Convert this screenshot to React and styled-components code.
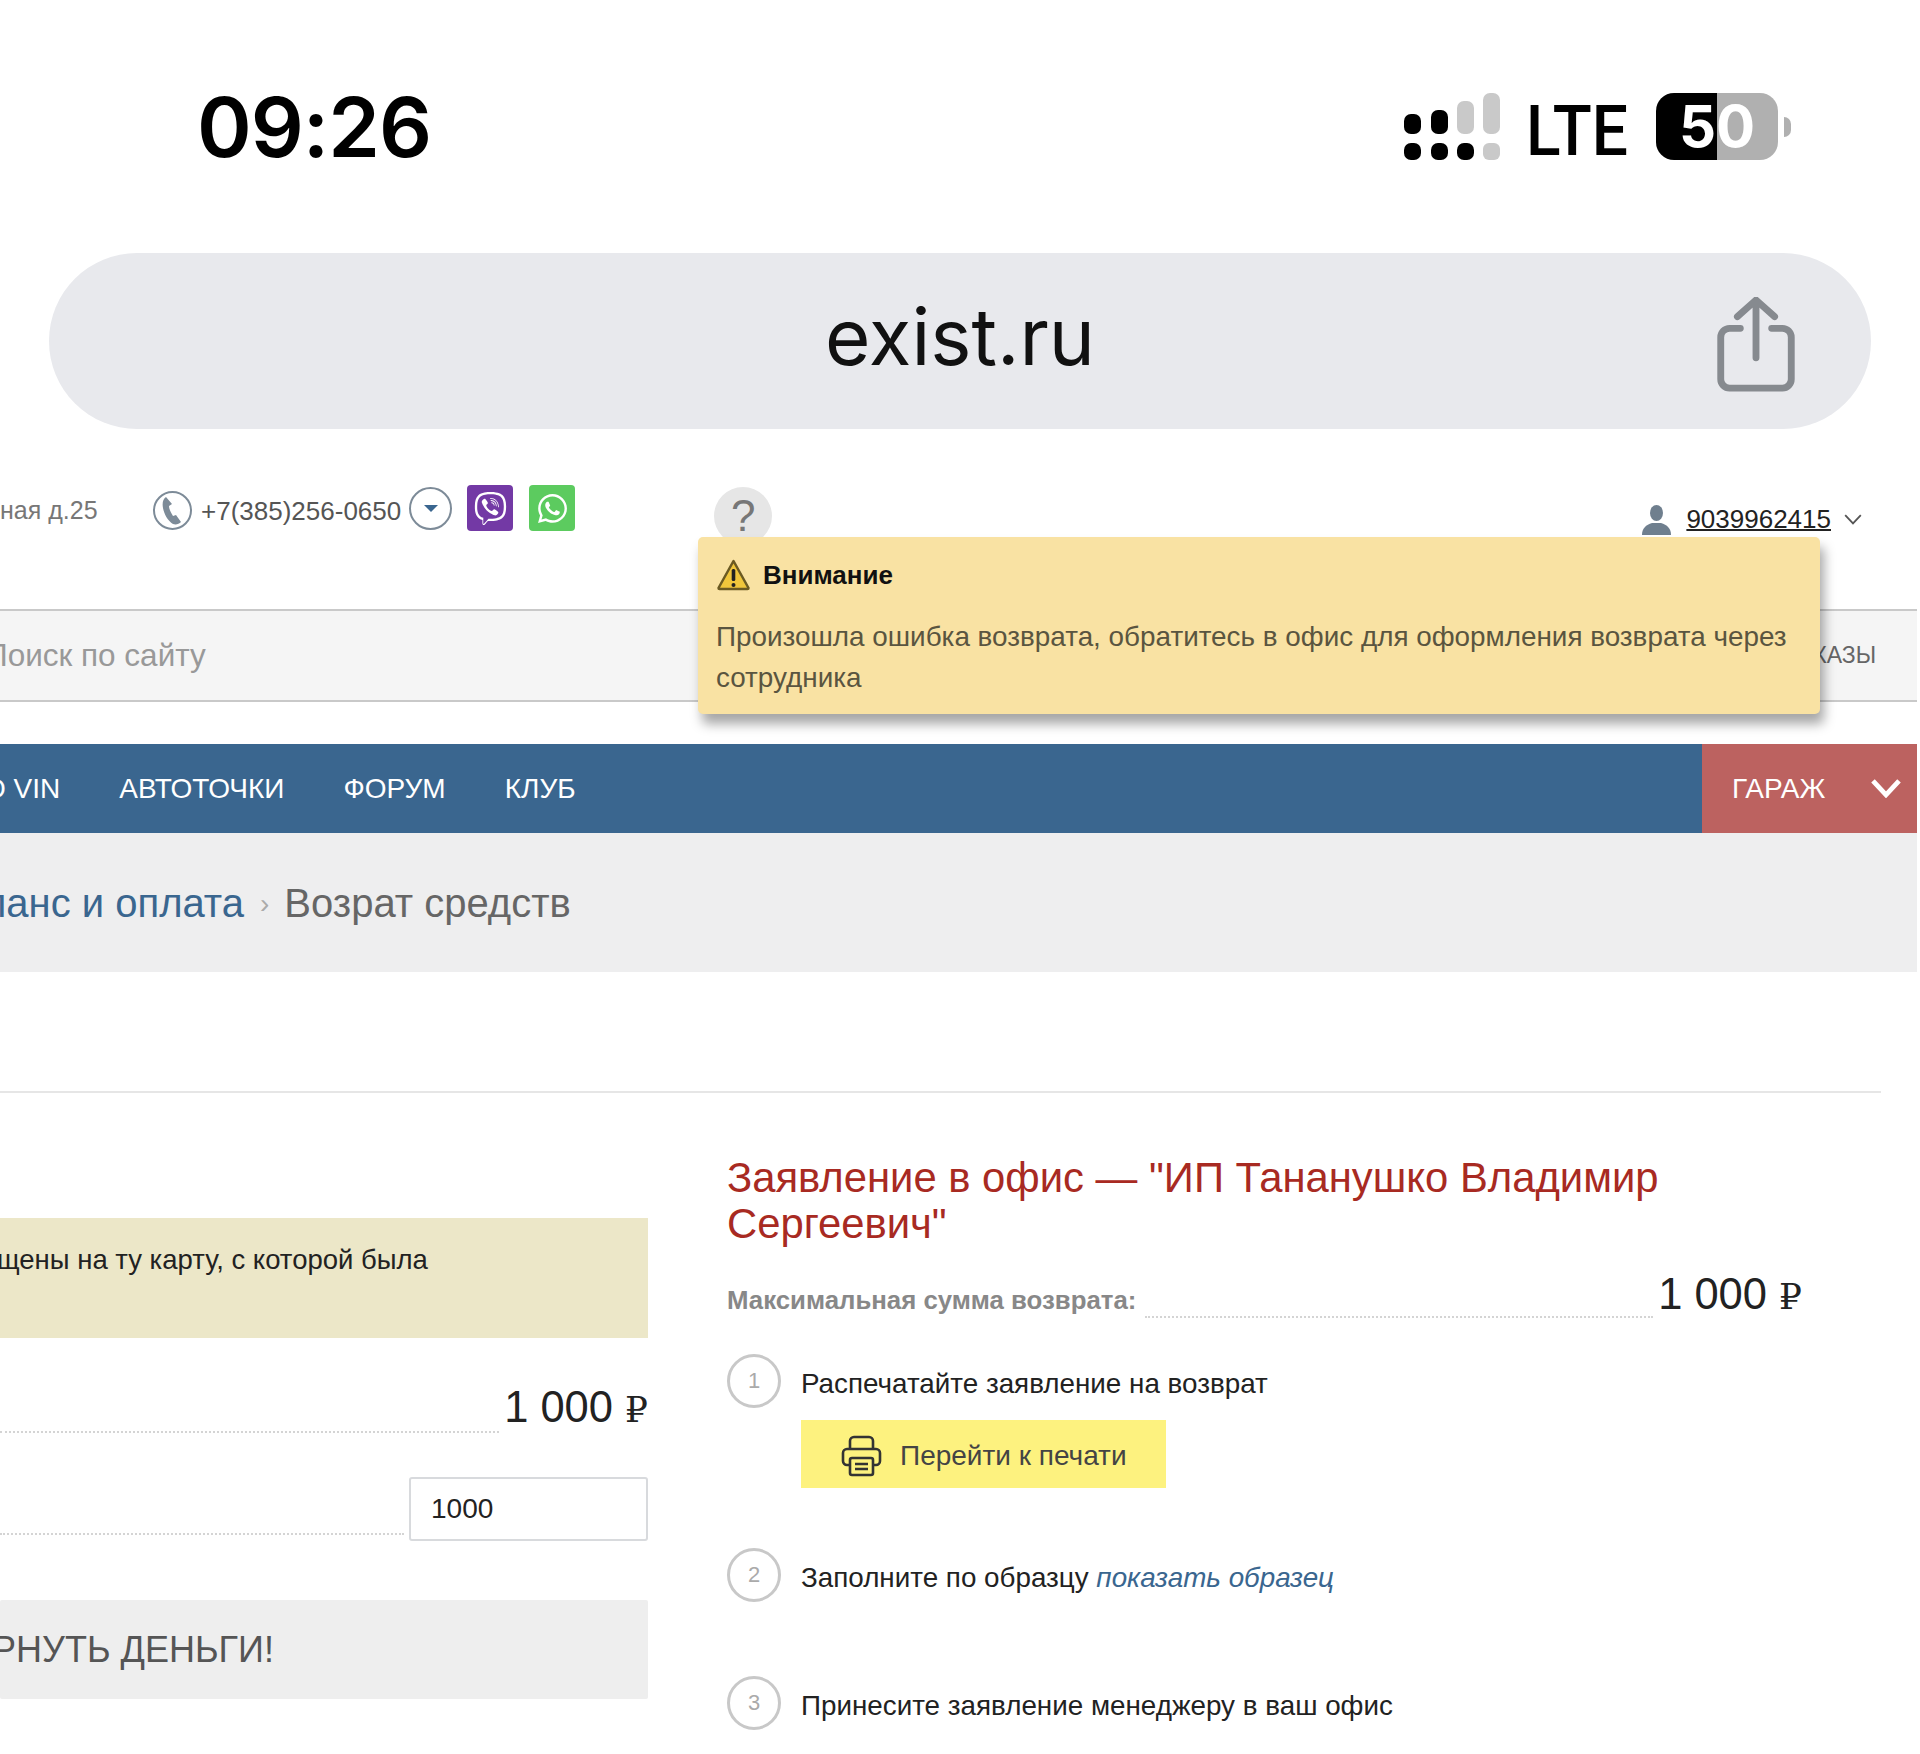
import styled, { createGlobalStyle } from "styled-components";
import { FaViber, FaWhatsapp } from "react-icons/fa";

const GlobalStyle = createGlobalStyle`
  * { box-sizing: border-box; }
  html, body { margin: 0; padding: 0; background: #fff; }
  body { font-family: "Liberation Sans", Arial, sans-serif; color: #222; }
`;

const Page = styled.div`
  position: relative;
  width: 1920px;
  height: 1754px;
  overflow: hidden;
  background: #fff;
`;

/* phone chrome */
const StatusBar = styled.div`
  display: flex;
  align-items: center;
  justify-content: space-between;
  height: 253px;
  padding: 0 129px 0 197px;
`;

const Clock = styled.div`
  font-family: Inter, sans-serif;
  font-size: 83px;
  font-weight: 600;
  letter-spacing: -1px;
  line-height: 1;
  color: #000;
  margin-top: 2px;
`;

const StatusIcons = styled.div`
  display: flex;
  align-items: center;
`;

const Lte = styled.div`
  width: 98px;
  margin: 8px 32px 0 26px;
  font-family: Roboto, sans-serif;
  font-size: 70px;
  font-weight: 500;
  line-height: 1;
  color: #000;
  transform: scaleX(0.915);
  transform-origin: left center;
`;

const Battery = styled.div`
  width: 122px;
  height: 67px;
  border-radius: 18px;
  background: linear-gradient(90deg, #000 0 50%, #b0b0b0 50% 100%);
  color: #fff;
  font-family: Inter, sans-serif;
  font-size: 58px;
  font-weight: 700;
  line-height: 67px;
  text-align: center;
`;

const BatteryNub = styled.div`
  width: 7px;
  height: 20px;
  margin-left: 6px;
  border-radius: 0 10px 10px 0;
  background: #b0b0b0;
`;

const UrlPill = styled.div`
  display: flex;
  align-items: center;
  justify-content: center;
  position: relative;
  height: 176px;
  margin: 0 49px;
  padding-bottom: 10px;
  border-radius: 88px;
  background: #e8e9ed;
  font-family: Inter, sans-serif;
  font-size: 78px;
  color: #111;
`;

const ShareButton = styled.svg`
  position: absolute;
  right: 75px;
  top: 44px;
`;

/* site header */
const TopRow = styled.div`
  display: flex;
  align-items: flex-start;
  height: 180px;
  padding: 56px 58px 0 0;
  font-size: 26px;
  color: #555;
`;

const Address = styled.div`
  width: 153px;
  margin-top: 11px;
  font-size: 25px;
  color: #777;
`;

const PhoneText = styled.div`
  margin: 11px 8px 0 9px;
  color: #555;
`;

const RoundIcon = styled.div`
  display: flex;
  align-items: center;
  justify-content: center;
  width: ${(p) => p.$size}px;
  height: ${(p) => p.$size}px;
  margin-top: ${(p) => p.$top}px;
  border: 2px solid #7d8b98;
  border-radius: 50%;
  background: #fff;
`;

const DropArrow = styled.span`
  width: 0;
  height: 0;
  border-left: 7px solid transparent;
  border-right: 7px solid transparent;
  border-top: 7px solid #3a668f;
`;

const Messenger = styled.div`
  display: flex;
  align-items: center;
  justify-content: center;
  width: 46px;
  height: 46px;
  margin-left: ${(p) => p.$left}px;
  border-radius: 4px;
  background: ${(p) => p.$color};
  color: #fff;
  font-size: 33px;
`;

const HelpBubble = styled.div`
  width: 58px;
  height: 58px;
  margin: 2px 0 0 139px;
  border-radius: 50%;
  background: #e6e6e6;
  color: #777;
  font-size: 44px;
  line-height: 58px;
  text-align: center;
`;

const UserBlock = styled.div`
  display: flex;
  align-items: center;
  margin: 19px 0 0 auto;
  color: #222;
`;

const UserNumber = styled.span`
  margin: 0 13px 0 15px;
  text-decoration: underline;
  text-decoration-thickness: 2px;
`;

const SearchBar = styled.div`
  display: flex;
  align-items: center;
  justify-content: space-between;
  height: 93px;
  margin-right: 3px;
  padding-right: 41px;
  border-top: 2px solid #c9c9c9;
  border-bottom: 2px solid #c9c9c9;
  background: #f5f5f5;
`;

const SearchPlaceholder = styled.div`
  margin-left: -15px;
  font-size: 31.5px;
  color: #999;
`;

const OrdersLink = styled.div`
  font-size: 23px;
  color: #666;
`;

const NavBar = styled.nav`
  display: flex;
  align-items: center;
  height: 89px;
  margin: 42px 3px 0 0;
  background: #3a668f;
  color: #fff;
  font-size: 28px;
`;

const NavItem = styled.div`
  margin-right: 59px;
  white-space: nowrap;
  &:first-child { margin-left: -16px; }
`;

const GarageTab = styled.div`
  display: flex;
  align-items: center;
  justify-content: space-between;
  align-self: stretch;
  width: 215px;
  margin-left: auto;
  padding: 0 16px 0 30px;
  background: #bc6260;
`;

const Crumbs = styled.div`
  display: flex;
  align-items: center;
  height: 139px;
  margin-right: 3px;
  padding-top: 2px;
  background: #eeeeef;
  font-size: 40px;
`;

const CrumbLink = styled.span`
  margin-left: -17px;
  color: #3a668f;
`;

const CrumbSep = styled.span`
  margin: 0 15px 0 16px;
  font-size: 28px;
  color: #aaa;
`;

const CrumbCurrent = styled.span`
  color: #666;
`;

const Divider = styled.div`
  height: 2px;
  margin: 119px 39px 0 0;
  background: #e6e6e6;
`;

/* main content */
const Columns = styled.div`
  display: grid;
  grid-template-columns: 648px 1075px;
  column-gap: 79px;
`;

const LeftCol = styled.div`
  padding-top: 125px;
`;

const Note = styled.div`
  height: 120px;
  padding-top: 26px;
  background: #ece7c8;
  font-size: 27.5px;
  line-height: 32px;
  color: #222;
  white-space: nowrap;
`;

const NoteText = styled.div`
  margin-left: -3px;
`;

const LeaderRow = styled.div`
  display: flex;
  align-items: flex-end;
  margin-top: ${(p) => p.$top}px;
`;

const Leader = styled.div`
  flex: 1;
  margin: 0 5px ${(p) => p.$bottom}px 0;
  border-bottom: 2px dotted #d4d4d4;
`;

const Amount = styled.div`
  font-size: 43.5px;
  line-height: 50px;
  color: #222;
  white-space: nowrap;
`;

const Rouble = styled.span`
  font-family: "DejaVu Serif", serif;
  font-size: 36px;
`;

const AmountInput = styled.input`
  width: 239px;
  height: 64px;
  padding: 0 20px;
  border: 2px solid #d8dadd;
  border-radius: 3px;
  outline: none;
  font-family: inherit;
  font-size: 28px;
  color: #222;
`;

const ReturnButton = styled.div`
  height: 99px;
  margin-top: 59px;
  border-radius: 2px;
  background: #eeeeee;
  font-size: 36px;
  line-height: 99px;
  color: #555;
  white-space: nowrap;
`;

const ReturnLabel = styled.div`
  margin-left: -56px;
`;

const RightCol = styled.div`
  padding-top: 62px;
`;

const Title = styled.h2`
  margin: 0;
  font-size: 41.8px;
  font-weight: 400;
  line-height: 46px;
  color: #a82a22;
`;

const MaxRow = styled(LeaderRow)`
  margin-top: 22px;
`;

const MaxLabel = styled.div`
  margin-right: 9px;
  padding-bottom: 7px;
  font-size: 25.8px;
  font-weight: 700;
  color: #888;
  white-space: nowrap;
`;

const Step = styled.div`
  display: flex;
  align-items: flex-start;
  margin-top: ${(p) => p.$top}px;
`;

const StepNumber = styled.div`
  flex: none;
  width: 54px;
  height: 54px;
  margin-right: 20px;
  border: 3px solid #c8c8c8;
  border-radius: 50%;
  font-size: 22px;
  line-height: 48px;
  text-align: center;
  color: #aaa;
`;

const StepText = styled.div`
  padding-top: 14px;
  font-size: 27.8px;
  line-height: 32px;
  color: #222;
`;

const SampleLink = styled.span`
  font-style: italic;
  color: #3a668f;
`;

const PrintButton = styled.div`
  display: flex;
  align-items: center;
  width: 365px;
  height: 68px;
  margin: 12px 0 0 74px;
  padding: 4px 0 0 40px;
  background: #fdf27f;
  font-size: 28px;
  color: #444;
`;

const PrintLabel = styled.span`
  margin-left: 18px;
`;

/* tooltip over the header */
const Alert = styled.div`
  position: absolute;
  left: 698px;
  top: 537px;
  width: 1122px;
  height: 177px;
  padding: 22px 18px;
  border-radius: 5px;
  background: #f9e2a3;
  box-shadow: 4px 10px 12px rgba(0, 0, 0, 0.35);
`;

const AlertHead = styled.div`
  display: flex;
  align-items: center;
  gap: 12px;
  font-size: 26px;
  font-weight: 700;
  color: #111;
`;

const AlertBody = styled.div`
  margin-top: 25px;
  font-size: 27.85px;
  line-height: 41px;
  color: #5a5540;
`;

const Signal = () => (
  <svg width="96" height="67" viewBox="0 0 96 67">
    <g fill="#000">
      <rect x="0" y="21" width="17" height="20" rx="7" />
      <rect x="27" y="17" width="17" height="24" rx="7" />
      <rect x="0" y="50" width="17" height="17" rx="7" />
      <rect x="27" y="50" width="17" height="17" rx="7" />
      <rect x="53" y="50" width="17" height="17" rx="7" />
    </g>
    <g fill="#c9c9c9">
      <rect x="53" y="8" width="17" height="33" rx="7" />
      <rect x="79" y="0" width="17" height="41" rx="7" />
      <rect x="79" y="50" width="17" height="17" rx="6" />
    </g>
  </svg>
);

const ShareIcon = () => (
  <ShareButton width="80" height="96" viewBox="0 0 80 98" fill="none" stroke="#868a8f" strokeWidth="7" strokeLinecap="round" strokeLinejoin="round">
    <path d="M40 62V5M21 20L40 3l19 17" />
    <path d="M24 32H13a9 9 0 0 0-9 9v43a9 9 0 0 0 9 9h54a9 9 0 0 0 9-9V41a9 9 0 0 0-9-9H56" />
  </ShareButton>
);

const PhoneGlyph = () => (
  <svg width="24" height="30" viewBox="0 0 24 30">
    <path d="M5 1c-3 2-4 6-3 11 1 6 5 13 10 16 3 1 6 0 8-2l-5-7-3 1c-2-3-4-7-4-10l3-2z" fill="#7d8b98" />
  </svg>
);

const WarningIcon = () => (
  <svg width="35" height="32" viewBox="0 0 34 32">
    <path d="M17 2L2 29a1 1 0 0 0 1 1h28a1 1 0 0 0 1-1z" fill="#f0c63c" stroke="#6b5a22" strokeWidth="2.5" strokeLinejoin="round" />
    <rect x="15.2" y="10" width="3.6" height="12" rx="1.5" fill="#222" />
    <circle cx="17" cy="26" r="2" fill="#222" />
  </svg>
);

const UserIcon = () => (
  <svg width="29" height="30" viewBox="0 0 29 30">
    <ellipse cx="14.5" cy="8" rx="6.5" ry="8" fill="#6f7f8e" />
    <path d="M0 30c0-7 4-10 10-12h9c6 2 10 5 10 12z" fill="#6f7f8e" />
  </svg>
);

const Chevron = ({ size, weight, color }) => (
  <svg width={size} height={size * 0.62} viewBox="0 0 16 10" fill="none" stroke={color} strokeWidth={weight}>
    <path d="M1 1l7 7.5L15 1" />
  </svg>
);

const PrinterIcon = () => (
  <svg width="41" height="42" viewBox="0 0 41 42" fill="none" stroke="#333" strokeWidth="2.6" strokeLinejoin="round">
    <path d="M9 14V6a4 4 0 0 1 4-4h15a4 4 0 0 1 4 4v8" />
    <path d="M9 30H6a4 4 0 0 1-4-4V18a4 4 0 0 1 4-4h29a4 4 0 0 1 4 4v8a4 4 0 0 1-4 4h-3" />
    <rect x="9" y="23" width="23" height="17" rx="2" />
    <path d="M14 29h13M14 34h13" />
  </svg>
);

const App = () => (
  <Page>
    <GlobalStyle />
    <StatusBar>
      <Clock>09:26</Clock>
      <StatusIcons>
        <Signal />
        <Lte>LTE</Lte>
        <Battery>50</Battery>
        <BatteryNub />
      </StatusIcons>
    </StatusBar>
    <UrlPill>
      exist.ru
      <ShareIcon />
    </UrlPill>

    <TopRow>
      <Address>ная д.25</Address>
      <RoundIcon $size={39} $top={6}>
        <PhoneGlyph />
      </RoundIcon>
      <PhoneText>+7(385)256-0650</PhoneText>
      <RoundIcon $size={43} $top={2}>
        <DropArrow />
      </RoundIcon>
      <Messenger $color="#7339a5" $left={15}>
        <FaViber />
      </Messenger>
      <Messenger $color="#5ccb5f" $left={16}>
        <FaWhatsapp />
      </Messenger>
      <HelpBubble>?</HelpBubble>
      <UserBlock>
        <UserIcon />
        <UserNumber>9039962415</UserNumber>
        <Chevron size={18} weight={1.6} color="#555" />
      </UserBlock>
    </TopRow>

    <SearchBar>
      <SearchPlaceholder>Поиск по сайту</SearchPlaceholder>
      <OrdersLink>ЗАКАЗЫ</OrdersLink>
    </SearchBar>

    <NavBar>
      <NavItem>О VIN</NavItem>
      <NavItem>АВТОТОЧКИ</NavItem>
      <NavItem>ФОРУМ</NavItem>
      <NavItem>КЛУБ</NavItem>
      <GarageTab>
        ГАРАЖ
        <Chevron size={30} weight={2.6} color="#fff" />
      </GarageTab>
    </NavBar>

    <Crumbs>
      <CrumbLink>ланс и оплата</CrumbLink>
      <CrumbSep>›</CrumbSep>
      <CrumbCurrent>Возрат средств</CrumbCurrent>
    </Crumbs>

    <Divider />

    <Columns>
      <LeftCol>
        <Note>
          <NoteText>щены на ту карту, с которой была</NoteText>
        </Note>
        <LeaderRow $top={44}>
          <Leader $bottom={2} />
          <Amount>
            1 000 <Rouble>₽</Rouble>
          </Amount>
        </LeaderRow>
        <LeaderRow $top={42}>
          <Leader $bottom={6} />
          <AmountInput defaultValue="1000" />
        </LeaderRow>
        <ReturnButton>
          <ReturnLabel>ВЕРНУТЬ ДЕНЬГИ!</ReturnLabel>
        </ReturnButton>
      </LeftCol>

      <RightCol>
        <Title>
          Заявление в офис — "ИП Тананушко Владимир
          <br />
          Сергеевич"
        </Title>
        <MaxRow>
          <MaxLabel>Максимальная сумма возврата:</MaxLabel>
          <Leader $bottom={4} />
          <Amount>
            1 000 <Rouble>₽</Rouble>
          </Amount>
        </MaxRow>
        <Step $top={32}>
          <StepNumber>1</StepNumber>
          <StepText>Распечатайте заявление на возврат</StepText>
        </Step>
        <PrintButton>
          <PrinterIcon />
          <PrintLabel>Перейти к печати</PrintLabel>
        </PrintButton>
        <Step $top={60}>
          <StepNumber>2</StepNumber>
          <StepText>
            Заполните по образцу <SampleLink>показать образец</SampleLink>
          </StepText>
        </Step>
        <Step $top={74}>
          <StepNumber>3</StepNumber>
          <StepText>Принесите заявление менеджеру в ваш офис</StepText>
        </Step>
      </RightCol>
    </Columns>

    <Alert>
      <AlertHead>
        <WarningIcon />
        Внимание
      </AlertHead>
      <AlertBody>
        Произошла ошибка возврата, обратитесь в офис для оформления возврата через сотрудника
      </AlertBody>
    </Alert>
  </Page>
);

export default App;
